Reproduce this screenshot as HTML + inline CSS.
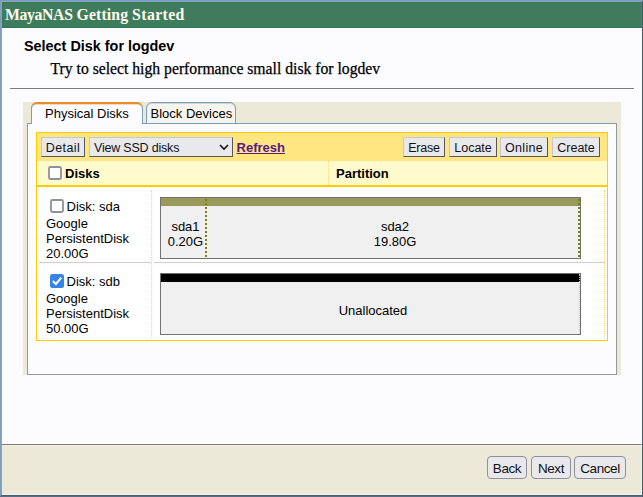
<!DOCTYPE html>
<html><head><meta charset="utf-8"><title>MayaNAS Getting Started</title>
<style>
html,body{margin:0;padding:0}
body{width:643px;height:497px;position:relative;overflow:hidden;background:#fcfcfe;font-family:"Liberation Sans",sans-serif;font-size:13px;color:#000}
.a{position:absolute;white-space:nowrap;line-height:1}
.t{position:absolute;white-space:nowrap;line-height:20px;height:20px}
#frame-t{left:0;top:0;width:643px;height:1px;background:#7f9db9}
#frame-t2{left:0;top:1px;width:642px;height:1px;background:#86a4c5}
#frame-l{left:0;top:0;width:1px;height:497px;background:#7f9db9}
#frame-l2{left:1px;top:1px;width:1px;height:495px;background:#86a4c5}
#frame-r{left:642px;top:1px;width:1px;height:496px;background:#48596f}
#frame-r2{left:641px;top:28px;width:1px;height:467px;background:rgba(255,255,255,.4)}
#frame-b{left:0;top:496px;width:643px;height:1px;background:#586e86}
#frame-b1{left:1px;top:495px;width:642px;height:1px;background:#4a607a}
#frame-b2{left:2px;top:494px;width:640px;height:1px;background:rgba(255,255,255,.4)}
#hdr{left:2px;top:2px;width:640px;height:26px;background:#3f7c5e;box-sizing:border-box;border-top:1px solid #3a7a58;border-left:1px solid #3a7a58;border-bottom:1px solid #30755a;border-right:1px solid #41835f}
#hdr-hl{left:2px;top:28px;width:639px;height:1px;background:#fff}
#title{left:5px;top:6px;font:bold 15.75px "Liberation Serif",serif;color:#fffbec}
#h1{left:24px;top:38px;font:bold 14.4px "Liberation Sans",sans-serif}
#sub{left:50.5px;top:60px;font:15.7px "Liberation Serif",serif;-webkit-text-stroke:.25px #000}
#hr{left:10px;top:88px;width:624px;height:1px;background:#7b7b7b;box-shadow:0 0 0 1px #fff}
#tabwrap{left:23px;top:102px;width:598px;height:273px;background:#ece9d8}
#panel{left:27px;top:123px;width:590px;height:252px;box-sizing:border-box;border:1px solid #919b9c;border-top-color:#7f9db9;background:#fcfcfe;box-shadow:inset -1px -1px 0 #fff}
#tab1{left:31px;top:102px;width:112px;height:22px;box-sizing:border-box;background:#fcfcfe;border:1px solid #7f9db9;border-bottom:0;border-top:2px solid #e68b2c;border-radius:6px 6px 0 0;box-shadow:inset 0 1px 0 rgba(230,139,44,.3)}
#tab2{left:146px;top:102px;width:90px;height:22px;box-sizing:border-box;background:#f5f5ee;border:1px solid #7f9db9;border-radius:6px 6px 0 0;box-shadow:inset 0 1px 0 rgba(127,157,185,.35)}
#footer{left:2px;top:444px;width:640px;height:50px;background:#ece9d8;border-top:1px solid #7b7b7b;box-shadow:0 -1px 0 #fff, inset 0 1px 0 #f5f1e1}
.fbtn{position:absolute;top:456px;height:23px;box-sizing:border-box;border:1px solid #8f8f9d;border-radius:4px;background:#e9e9ed;font:13.5px/23px "Liberation Sans",sans-serif;text-align:center;letter-spacing:-.4px;color:#111}
.tbtn{position:absolute;top:137px;height:20px;box-sizing:border-box;border:1px solid;border-color:#c6c6ce #56565e #56565e #c6c6ce;background:#e9e9ed;font:12.5px/20px "Liberation Sans",sans-serif;text-align:center;color:#111;white-space:nowrap}
#tbl{left:36px;top:132px;width:572px;height:209px;box-sizing:border-box;border:1px solid #ffcc00;background:#fcfcfe}
#tbar{left:37px;top:133px;width:570px;height:28px;background:#ffe680}
#thead{left:37px;top:161px;width:570px;height:24px;background:#fffbcd}
#gold{left:37px;top:185px;width:570px;height:2px;background:#ffcc00}
.wc{position:absolute;background:#fff}
.cb{position:absolute;width:14px;height:14px}
.cell{position:absolute;font:13px/15px "Liberation Sans",sans-serif;white-space:nowrap}
.vd{position:absolute;width:0;border-left:1px dotted #ffdc5c}
.hsep{position:absolute;height:1px;background:#cfcfcf}
.pbox{position:absolute;left:160px;width:421px;height:62px;box-sizing:border-box;border:1px solid #727272;background:#f0f0f0}
.ptxt{position:absolute;font:13px/15px "Liberation Sans",sans-serif;text-align:center;white-space:nowrap}
</style></head><body>
<div class="a" id="hdr"></div><div class="a" id="hdr-hl"></div>
<div class="a" id="title"><span style="letter-spacing:-.35px">MayaNAS</span> <span style="letter-spacing:.13px">Getting</span> <span style="letter-spacing:.4px">Started</span></div>
<div class="a" id="h1">Select Disk for logdev</div>
<div class="a" id="sub">Try to select high performance small disk for logdev</div>
<div class="a" id="hr"></div>

<div class="a" id="tabwrap"></div>
<div class="a" id="panel"></div>
<div class="a" id="tab2"></div>
<div class="a" id="tab1"></div>
<div class="a" style="left:45px;top:107px;font-size:13px">Physical Disks</div>
<div class="a" style="left:150.5px;top:107px;font-size:13px">Block Devices</div>

<div class="a" id="tbl"></div>
<div class="a" id="tbar"></div>
<div class="a" id="thead"></div>
<div class="a" id="gold"></div>

<div class="tbtn" style="left:41px;width:44px;letter-spacing:.4px">Detail</div>
<div class="tbtn" style="left:89px;width:144px;text-align:left;padding-left:4px;letter-spacing:-.2px">View SSD disks
<svg style="position:absolute;left:128.5px;top:6px" width="10" height="7" viewBox="0 0 10 7"><path d="M1 1 L5 5 L9 1" fill="none" stroke="#15141a" stroke-width="1.6"/></svg></div>
<div class="a" style="left:236.6px;top:140px;font:bold 13px 'Liberation Sans',sans-serif;color:#551a8b;text-decoration:underline">Refresh</div>
<div class="tbtn" style="left:403px;width:42px;letter-spacing:-.2px">Erase</div>
<div class="tbtn" style="left:449px;width:48px">Locate</div>
<div class="tbtn" style="left:500px;width:48px;letter-spacing:.3px">Online</div>
<div class="tbtn" style="left:552px;width:48px">Create</div>

<svg class="cb" style="left:48px;top:166px" viewBox="0 0 14 14"><rect x="1" y="1" width="12" height="12" rx="1.4" fill="#fff" stroke="#8f8f9d" stroke-width="1.8"/></svg>
<div class="a" style="left:65px;top:166px;font:bold 13px 'Liberation Sans',sans-serif">Disks</div>
<div class="vd" style="left:328px;top:161px;height:24px"></div>
<div class="a" style="left:336px;top:166px;font:bold 13px 'Liberation Sans',sans-serif">Partition</div>

<div class="wc" style="left:39px;top:189px;width:113px;height:74px"></div><div class="wc" style="left:154px;top:189px;width:451px;height:74px"></div><div class="wc" style="left:39px;top:265px;width:113px;height:73px"></div><div class="wc" style="left:154px;top:265px;width:451px;height:73px"></div>
<!-- row 1 -->
<svg class="cb" style="left:50px;top:199px" viewBox="0 0 14 14"><rect x="1" y="1" width="12" height="12" rx="1.4" fill="#fff" stroke="#8f8f9d" stroke-width="1.8"/></svg>
<div class="cell" style="left:66.6px;top:199px">Disk: sda</div>
<div class="cell" style="left:46px;top:216px">Google<br>PersistentDisk<br>20.00G</div>
<div class="hsep" style="left:39px;top:262px;width:112px"></div>
<div class="hsep" style="left:154px;top:262px;width:451px"></div>
<div class="vd" style="left:151px;top:190px;height:148px"></div>
<div class="vd" style="left:604px;top:190px;height:148px"></div>
<div class="pbox" style="top:197px"><div style="position:absolute;left:0;top:0;width:419px;height:8px;background:#99995c"></div>
<div style="position:absolute;left:44px;top:1px;height:58px;width:2px;background:repeating-linear-gradient(to bottom,#7f7f00 0,#7f7f00 2px,transparent 2px,transparent 4px)"></div>
<div style="position:absolute;left:417px;top:1px;height:58px;width:2px;background:repeating-linear-gradient(to bottom,#7f7f00 0,#7f7f00 2px,transparent 2px,transparent 4px)"></div></div>
<div class="ptxt" style="left:161px;width:49px;top:219px">sda1<br>0.20G</div>
<div class="ptxt" style="left:345px;width:100px;top:219px">sda2<br>19.80G</div>

<!-- row 2 -->
<svg class="cb" style="left:50px;top:274px" viewBox="0 0 14 14"><rect x="0" y="0" width="14" height="14" rx="2.5" fill="#3584e4"/><path d="M2.8 7 L5.9 10 L11.3 3.6" fill="none" stroke="#fff" stroke-width="2"/></svg>
<div class="cell" style="left:66.6px;top:274px">Disk: sdb</div>
<div class="cell" style="left:46px;top:291px">Google<br>PersistentDisk<br>50.00G</div>
<div class="pbox" style="top:273px"><div style="position:absolute;left:0;top:0;width:419px;height:8px;background:#000"></div><div style="position:absolute;left:418px;top:0;height:60px;width:0;border-left:1px dotted #eecb3a"></div></div>
<div class="ptxt" style="left:323px;width:100px;top:303px">Unallocated</div>

<div class="a" id="footer"></div>
<div class="fbtn" style="left:487px;width:40px">Back</div>
<div class="fbtn" style="left:531px;width:40px">Next</div>
<div class="fbtn" style="left:574px;width:52px">Cancel</div>

<div class="a" id="frame-t"></div><div class="a" id="frame-t2"></div><div class="a" id="frame-l"></div><div class="a" id="frame-l2"></div>
<div class="a" id="frame-r2"></div><div class="a" id="frame-b2"></div><div class="a" id="frame-b1"></div><div class="a" id="frame-b"></div><div class="a" id="frame-r"></div>
</body></html>
